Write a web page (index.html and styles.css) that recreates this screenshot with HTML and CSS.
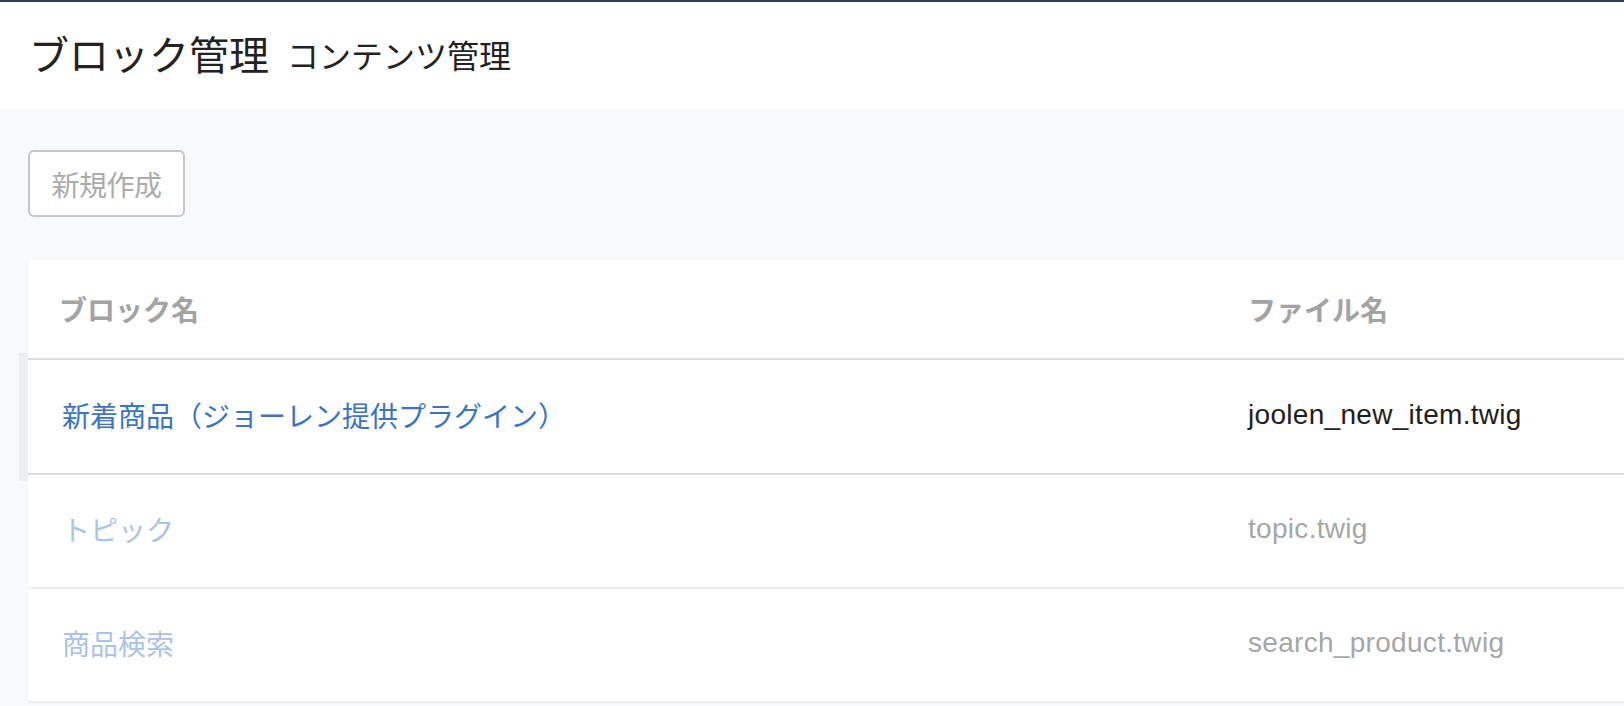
FILE: index.html
```html
<!DOCTYPE html>
<html lang="ja">
<head>
<meta charset="utf-8">
<title>ブロック管理</title>
<link rel="stylesheet" href="styles.css">
</head>
<body>
<div class="topbar"></div>
<header class="page-header">
  <h1 class="title">ブロック管理</h1>
  <span class="subtitle">コンテンツ管理</span>
</header>
<main class="content">
  <button class="btn-new" type="button">新規作成</button>
  <section class="card">
    <div class="row head">
      <div class="c1">ブロック名</div>
      <div class="c2">ファイル名</div>
    </div>
    <div class="row active">
      <span class="handle"></span>
      <div class="c1"><a class="link" href="#">新着商品（ジョーレン提供プラグイン）</a></div>
      <div class="c2 file">joolen_new_item.twig</div>
    </div>
    <div class="row faded">
      <div class="c1"><a class="link" href="#">トピック</a></div>
      <div class="c2 file">topic.twig</div>
    </div>
    <div class="row faded">
      <div class="c1"><a class="link" href="#">商品検索</a></div>
      <div class="c2 file">search_product.twig</div>
    </div>
  </section>
</main>
</body>
</html>
```

FILE: styles.css
```css
html, body {
  margin: 0;
  padding: 0;
}
body {
  background: #f8f9fb;
  font-family: "Liberation Sans", "Noto Sans CJK JP", sans-serif;
  color: #222;
  overflow: hidden;
}
.topbar {
  height: 2px;
  background: #2e3d4b;
}
.page-header {
  height: 107px;
  background: #fff;
  display: flex;
  align-items: center;
  padding-left: 29px;
  gap: 18px;
}
.title {
  margin: 0;
  font-size: 40px;
  font-weight: normal;
  color: #222;
  line-height: 1;
}
.subtitle {
  font-size: 32px;
  color: #222;
  line-height: 1;
  padding-top: 2px;
}
.content {
  padding: 41px 0 0 28px;
}
.btn-new {
  display: block;
  width: 157px;
  height: 67px;
  border: 2px solid #c6c6c6;
  border-radius: 6px;
  background: #fff;
  color: #ababab;
  font-family: "Noto Sans CJK JP", sans-serif;
  font-size: 28px;
  padding: 0;
  letter-spacing: -0.5px;
}
.card {
  margin-top: 43px;
  background: #fff;
  border-top-left-radius: 6px;
}
.row {
  position: relative;
  display: flex;
  align-items: center;
  box-sizing: border-box;
  height: 114px;
  padding-bottom: 4px;
  border-bottom: 2px solid #efefef;
  font-size: 28px;
}
.row.head {
  height: 100px;
  padding-bottom: 0;
  border-bottom-color: #dddddd;
  font-weight: bold;
  color: #a3a3a3;
}
.row.active {
  height: 115px;
  border-bottom-color: #dddddd;
}
.c1 {
  width: 1220px;
  padding-left: 31px;
  box-sizing: border-box;
}
.c2 {
  flex: 1;
}
.link {
  text-decoration: none;
  color: #3a74c2;
  font-family: "Noto Sans CJK JP", sans-serif;
}
.row.active .c1,
.row.faded .c1 {
  padding-left: 34px;
}
.row.faded .link {
  color: #a9c4e7;
}
.file {
  color: #1e1e1e;
  letter-spacing: 0.3px;
}
.row.faded .file {
  color: #a6a6a6;
}
.handle {
  position: absolute;
  left: -9px;
  top: -7px;
  bottom: -8px;
  width: 9px;
  background: #eceef2;
}
```
